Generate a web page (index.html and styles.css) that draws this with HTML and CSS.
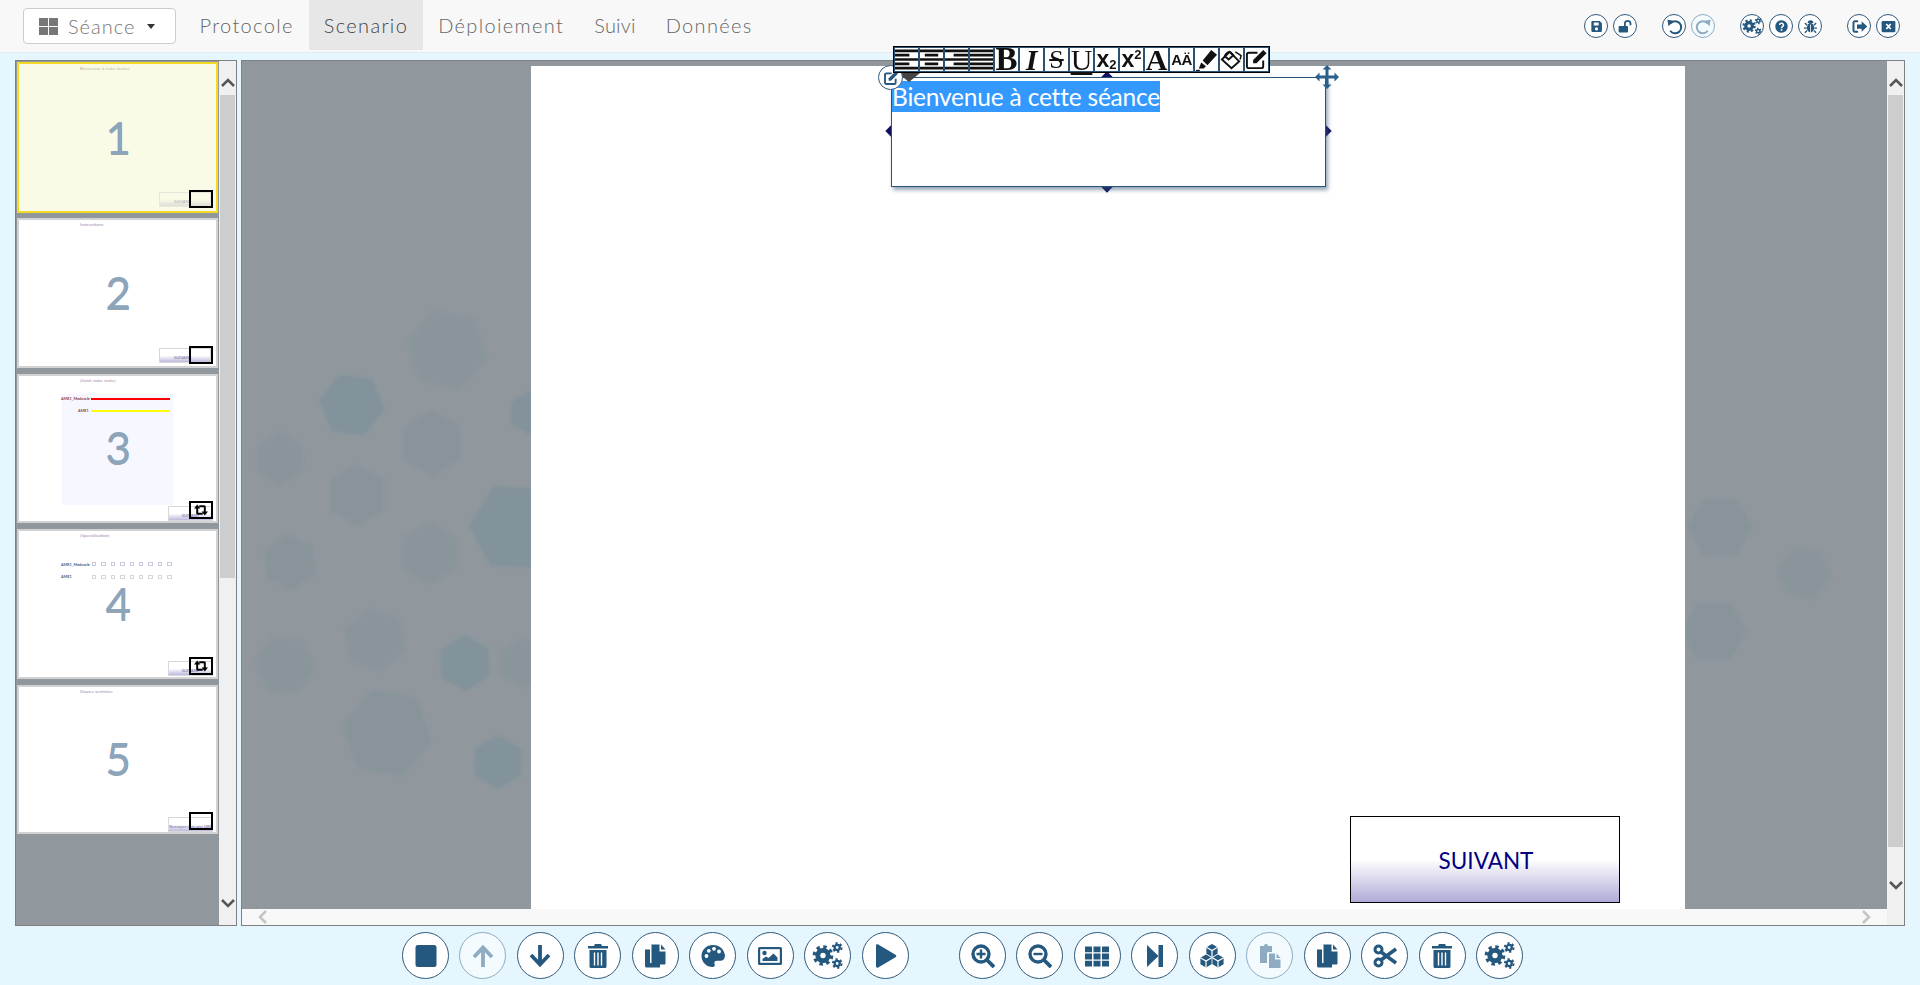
FILE: index.html
```html
<!DOCTYPE html>
<html lang="fr">
<head>
<meta charset="utf-8">
<title>Scenario</title>
<link rel="stylesheet" href="styles.css">
</head>
<body>
<svg class="sprite" xmlns="http://www.w3.org/2000/svg" aria-hidden="true">
  <symbol id="i-save" viewBox="0 0 24 24"><path fill-rule="evenodd" d="M4 2h14l4 4v14.500a1.500 1.500 0 0 1-1.500 1.500h-16.500a1.500 1.500 0 0 1-1.500-1.500V3.500A1.500 1.500 0 0 1 4 2zM7 4.500v5.500h9V4.500zM12 13.500a3 3 0 1 0 .01 0z"/></symbol>
  <symbol id="i-unlock" viewBox="0 0 24 24"><rect x="1" y="11" width="15" height="10.500" rx="1.500"/><path d="M11 11V7.500a4.500 4.500 0 0 1 9 0V10" fill="none" stroke="currentColor" stroke-width="2.800"/></symbol>
  <symbol id="i-undo" viewBox="0 0 24 24"><path d="M6.500 7.500A8.500 8.500 0 1 1 6 18" fill="none" stroke="currentColor" stroke-width="2.800"/><path d="M2 2.500l9 1.500-7.500 7.500z"/></symbol>
  <symbol id="i-redo" viewBox="0 0 24 24"><path d="M17.500 7.500A8.500 8.500 0 1 0 18 18" fill="none" stroke="currentColor" stroke-width="2.800"/><path d="M22 2.500l-9 1.500 7.500 7.500z"/></symbol>
  <symbol id="i-cogs" viewBox="0 0 24 24"><g fill="none" stroke="currentColor"><circle cx="8.500" cy="12" r="4" stroke-width="3.800"/><circle cx="8.500" cy="12" r="6.700" stroke-width="2.600" stroke-dasharray="2.630 2.630"/><circle cx="19.500" cy="5.800" r="2" stroke-width="1.800"/><circle cx="19.500" cy="5.800" r="3.400" stroke-width="1.500" stroke-dasharray="1.780 1.780"/><circle cx="19.500" cy="18.200" r="2" stroke-width="1.800"/><circle cx="19.500" cy="18.200" r="3.400" stroke-width="1.500" stroke-dasharray="1.780 1.780"/></g></symbol>
  <symbol id="i-question" viewBox="0 0 24 24"><circle cx="12" cy="12" r="11.500"/><path d="M8.500 9.300a3.600 3.400 0 1 1 5.300 3c-1.200.700-1.800 1.200-1.800 2.700" fill="none" stroke="#fff" stroke-width="2.800"/><rect x="10.500" y="16.800" width="3" height="3" fill="#fff"/></symbol>
  <symbol id="i-bug" viewBox="0 0 24 24"><ellipse cx="12" cy="14" rx="5.800" ry="7.500"/><path d="M7.500 6.500a4.500 4.500 0 0 1 9 0z"/><path d="M6.500 10L3 6.500M17.500 10L21 6.500M6 14.500H1.500M18 14.500h4.500M6.500 18.500L3 22M17.500 18.500L21 22" fill="none" stroke="currentColor" stroke-width="2.200"/><path d="M12 9v13" stroke="#fff" stroke-width="1.300"/></symbol>
  <symbol id="i-signout" viewBox="0 0 24 24"><path d="M10 4.500H5.500A2 2 0 0 0 3.500 6.500v11a2 2 0 0 0 2 2H10" fill="none" stroke="currentColor" stroke-width="2.800"/><path d="M8.500 9h6.500V4.500l8 7.500-8 7.500V15H8.500z"/></symbol>
  <symbol id="i-close" viewBox="0 0 24 24"><rect x="1" y="3" width="22" height="18" rx="2"/><path d="M8.500 8l7 8M15.500 8l-7 8" stroke="#fff" stroke-width="2.800"/></symbol>
  <symbol id="i-stop" viewBox="0 0 24 24"><rect x="1.500" y="1" width="21" height="22" rx="2.500"/></symbol>
  <symbol id="i-up" viewBox="0 0 24 24"><path d="M12 23V4M3 13l9-9.500 9 9.500" fill="none" stroke="currentColor" stroke-width="3.800"/></symbol>
  <symbol id="i-down" viewBox="0 0 24 24"><path d="M12 1v19M3 11l9 9.500 9-9.500" fill="none" stroke="currentColor" stroke-width="3.800"/></symbol>
  <symbol id="i-trash" viewBox="0 0 24 24"><path d="M9 0h6l1 2h6v2.500H2V2h6z"/><path d="M3.500 6h17v16.500a1.500 1.500 0 0 1-1.500 1.500H5a1.500 1.500 0 0 1-1.500-1.500z"/><path d="M8.500 8.500v13M12 8.500v13M15.500 8.500v13" stroke="#fff" stroke-width="1.400"/></symbol>
  <symbol id="i-copy" viewBox="0 0 24 24"><path d="M2 5.500h5v13.500h10v4.500H3.500A1.500 1.500 0 0 1 2 22z"/><path d="M8.500 0.500h8v7h6v12a1 1 0 0 1-1 1h-12a1 1 0 0 1-1-1z"/><path d="M18 0.500l4.500 5H18z"/></symbol>
  <symbol id="i-palette" viewBox="0 0 24 24"><path d="M12 1C5.500 1 0.500 5.800 0.500 12s5 11 11 11c2.200 0 2.700-1.700 2.100-3-.8-1.800.3-3.300 2.200-3.300h3.500c2.700 0 4.700-1.900 4.700-5C23.500 5.500 18.500 1 12 1z"/><g fill="#fff"><circle cx="5.500" cy="12" r="1.900"/><circle cx="7.800" cy="6.800" r="1.900"/><circle cx="13" cy="4.800" r="1.900"/><circle cx="18" cy="7.500" r="1.900"/></g></symbol>
  <symbol id="i-image" viewBox="0 0 24 24"><rect x="0" y="3" width="24" height="18" rx="1.500"/><rect x="2.200" y="5.200" width="19.600" height="13.600" fill="#fff"/><circle cx="6.500" cy="9" r="2.200"/><path d="M4.500 17v-2l3.500-2.500 2.500 1.500 5-4.500 4 4v3.500z"/></symbol>
  <symbol id="i-play" viewBox="0 0 24 24"><path d="M3 1.500c0-1.200 1.200-1.500 2.200-.9L22.500 10.800c1.100.7 1.100 1.700 0 2.400L5.200 23.400c-1 .6-2.200.3-2.200-.9z"/></symbol>
  <symbol id="i-zoomin" viewBox="0 0 24 24"><circle cx="10" cy="10" r="8" fill="none" stroke="currentColor" stroke-width="3.400"/><path d="M15.500 15.500L23 23" stroke="currentColor" stroke-width="3.800"/><path d="M10 5.500v9M5.500 10h9" stroke="currentColor" stroke-width="2.400"/></symbol>
  <symbol id="i-zoomout" viewBox="0 0 24 24"><circle cx="10" cy="10" r="8" fill="none" stroke="currentColor" stroke-width="3.400"/><path d="M15.500 15.500L23 23" stroke="currentColor" stroke-width="3.800"/><path d="M5.500 10h9" stroke="currentColor" stroke-width="2.400"/></symbol>
  <symbol id="i-th" viewBox="0 0 24 24"><path d="M0 2.500h7v5.800H0zM8.500 2.500h7v5.800h-7zM17 2.500h7v5.800h-7zM0 9.600h7v5.800H0zM8.500 9.600h7v5.800h-7zM17 9.600h7v5.800h-7zM0 16.700h7v5.800H0zM8.500 16.700h7v5.800h-7zM17 16.700h7v5.800h-7z"/></symbol>
  <symbol id="i-next" viewBox="0 0 24 24"><path d="M4 1l11.500 11L4 23z"/><rect x="15.500" y="1" width="4.500" height="22"/></symbol>
  <symbol id="i-cubes" viewBox="0 0 24 24"><g transform="translate(12 6.500)"><path d="M0-6.500l5.600 3.200v6.600L0 6.500l-5.600-3.200v-6.600z"/><path d="M-5.600-3.300L0 0l5.600-3.300M0 0v6.500" fill="none" stroke="#fff" stroke-width="1.200"/></g><g transform="translate(6 17)"><path d="M0-6.500l5.600 3.200v6.600L0 6.500l-5.600-3.200v-6.600z"/><path d="M-5.600-3.300L0 0l5.600-3.300M0 0v6.500" fill="none" stroke="#fff" stroke-width="1.200"/></g><g transform="translate(18 17)"><path d="M0-6.500l5.600 3.200v6.600L0 6.500l-5.600-3.200v-6.600z"/><path d="M-5.600-3.300L0 0l5.600-3.300M0 0v6.500" fill="none" stroke="#fff" stroke-width="1.200"/></g></symbol>
  <symbol id="i-paste" viewBox="0 0 24 24"><path d="M2 2h4a2 2 0 0 1 4 0h4v6h-3.500a1.500 1.500 0 0 0-1.500 1.500V19H2z"/><path d="M11 9.500h6v6h5.500V24H11z"/><path d="M18.500 9.500l4 4.500h-4z"/></symbol>
  <symbol id="i-cut" viewBox="0 0 24 24"><g fill="none" stroke="currentColor"><circle cx="5.500" cy="5.500" r="3.500" stroke-width="3"/><circle cx="5.500" cy="18.500" r="3.500" stroke-width="3"/><path d="M8 8l15 11M8 16L23 5" stroke-width="3.600"/></g></symbol>
  <symbol id="i-edit" viewBox="0 0 24 24"><path d="M19 13v6a2 2 0 0 1-2 2H5a2 2 0 0 1-2-2V7a2 2 0 0 1 2-2h8" fill="none" stroke="currentColor" stroke-width="2.800"/><path d="M8.500 12.500L19 2l3.500 3.500L12 16H8.500z"/></symbol>
  <symbol id="i-move" viewBox="0 0 24 24"><path d="M12 0l4.500 4.500h-3v6h6v-3L24 12l-4.500 4.500v-3h-6v6h3L12 24l-4.500-4.500h3v-6h-6v3L0 12l4.500-4.500v3h6v-6h-3z"/></symbol>
  <symbol id="i-retweet" viewBox="0 0 24 24"><path d="M5.500 8v9.500a1 1 0 0 0 1 1H15M18.500 16V6.500a1 1 0 0 0-1-1H9" fill="none" stroke="#000" stroke-width="3.400"/><path d="M0 9.500L5.500 2.500l5.500 7zM13 14.500l5.500 7 5.500-7z" fill="#000"/></symbol>
  <symbol id="a-left" viewBox="0 0 24 24"><path d="M0 3h24M0 7.500h15M0 12h24M0 16.500h15M0 21h24" stroke="#111" stroke-width="2.800"/></symbol>
  <symbol id="a-center" viewBox="0 0 24 24"><path d="M0 3h24M5 7.500h14M0 12h24M5 16.500h14M0 21h24" stroke="#111" stroke-width="2.800"/></symbol>
  <symbol id="a-right" viewBox="0 0 24 24"><path d="M0 3h24M9 7.500h15M0 12h24M9 16.500h15M0 21h24" stroke="#111" stroke-width="2.800"/></symbol>
  <symbol id="a-just" viewBox="0 0 24 24"><path d="M0 3h24M0 7.500h24M0 12h24M0 16.500h24M0 21h24" stroke="#111" stroke-width="2.800"/></symbol>
  <symbol id="a-marker" viewBox="0 0 24 24"><path d="M8 13L17 2l6 5-10 11z" fill="#111"/><path d="M6.500 15l5 4-2.500 2.500H4z" fill="#111"/><path d="M1 23.500h4" stroke="#111" stroke-width="1.500"/></symbol>
  <symbol id="a-erase" viewBox="0 0 24 24"><path d="M2 12L10 4l10 10-8 7z" fill="none" stroke="#111" stroke-width="2"/><path d="M5 8.500c1-3 4-5 6-4l3 3-5 4.500z" fill="none" stroke="#111" stroke-width="2"/><path d="M16 4l6 4-1 4" fill="none" stroke="#111" stroke-width="1.600"/></symbol>
  <symbol id="a-edit" viewBox="0 0 24 24"><path d="M19 13v6a2 2 0 0 1-2 2H4a2 2 0 0 1-2-2V7a2 2 0 0 1 2-2h9" fill="none" stroke="#111" stroke-width="2"/><path d="M8.500 12.500L19 2l3.500 3.500L12 16H8.500z" fill="#111"/></symbol>
  <symbol id="hexagon" viewBox="-1 -1 2 2" overflow="visible"><path d="M1 0L.5 .87L-.5 .87L-1 0L-.5 -.87L.5 -.87z"/></symbol>
</svg>

<div class="app">
  <header class="topbar">
    <button class="session-btn">
      <span class="grid-glyph"><i></i><i></i><i></i><i></i></span>
      <span>Séance</span>
      <span class="caret"></span>
    </button>
    <nav class="nav">
      <a class="nav-item">Protocole</a>
      <a class="nav-item nav-active">Scenario</a>
      <a class="nav-item">Déploiement</a>
      <a class="nav-item nav-tight">Suivi</a>
      <a class="nav-item">Données</a>
    </nav>
    <div class="top-actions">
      <div class="top-group">
        <span class="rbtn rbtn-s"><svg class="ico-sm"><use href="#i-save"/></svg></span>
        <span class="rbtn rbtn-s"><svg class="ico-md"><use href="#i-unlock"/></svg></span>
      </div>
      <div class="top-group">
        <span class="rbtn rbtn-s"><svg class="ico-lg"><use href="#i-undo"/></svg></span>
        <span class="rbtn rbtn-s rbtn-off"><svg class="ico-lg"><use href="#i-redo"/></svg></span>
      </div>
      <div class="top-group">
        <span class="rbtn rbtn-s"><svg class="ico-xl"><use href="#i-cogs"/></svg></span>
        <span class="rbtn rbtn-s"><svg class="ico-sm"><use href="#i-question"/></svg></span>
        <span class="rbtn rbtn-s"><svg class="ico-md"><use href="#i-bug"/></svg></span>
      </div>
      <div class="top-group">
        <span class="rbtn rbtn-s"><svg class="ico-lg"><use href="#i-signout"/></svg></span>
        <span class="rbtn rbtn-s"><svg class="ico-md"><use href="#i-close"/></svg></span>
      </div>
    </div>
  </header>

  <main class="workspace">
    <aside class="thumbs-panel">
      <div class="thumbs">
        <article class="thumb thumb-current">
          <p class="thumb-title">Bienvenue à cette séance</p>
          <span class="thumb-num">1</span>
          <span class="mini-btn mini-wide mini-faded">SUIVANT</span>
          <span class="mini-frame"></span>
        </article>
        <article class="thumb">
          <p class="thumb-title">Instructions</p>
          <span class="thumb-num">2</span>
          <span class="mini-btn mini-wide">SUIVANT</span>
          <span class="mini-frame"></span>
        </article>
        <article class="thumb">
          <p class="thumb-title">[Saisir votre texte]</p>
          <div class="mini-area"></div>
          <span class="mini-label mini-l1">AME1_Moduscle</span>
          <span class="mini-bar mini-bar-red"></span>
          <span class="mini-label mini-l2">AME1</span>
          <span class="mini-bar mini-bar-yellow"></span>
          <span class="thumb-num">3</span>
          <span class="mini-btn mini-low">SUIVANT</span>
          <span class="mini-frame"><svg><use href="#i-retweet"/></svg></span>
        </article>
        <article class="thumb">
          <p class="thumb-title">[Specialisation]</p>
          <span class="mini-label mini-l3">AME1_Moduscle</span>
          <div class="mini-checks mini-checks-a"><i></i><i></i><i></i><i></i><i></i><i></i><i></i><i></i><i></i></div>
          <span class="mini-label mini-l4">AME1</span>
          <div class="mini-checks mini-checks-b"><i></i><i></i><i></i><i></i><i></i><i></i><i></i><i></i><i></i></div>
          <span class="thumb-num">4</span>
          <span class="mini-btn mini-low">SUIVANT</span>
          <span class="mini-frame"><svg><use href="#i-retweet"/></svg></span>
        </article>
        <article class="thumb">
          <p class="thumb-title">Séance terminée</p>
          <span class="thumb-num">5</span>
          <span class="mini-btn mini-low">Renvoyer vers une URL</span>
          <span class="mini-frame"></span>
        </article>
      </div>
      <div class="vscroll">
        <span class="scroll-end"><svg class="chev"><path d="M1 8l6-6 6 6"/></svg></span>
        <span class="vthumb vthumb-left"></span>
        <span class="scroll-fill"></span>
        <span class="scroll-end scroll-end-low"><svg class="chev"><path d="M1 2l6 6 6-6"/></svg></span>
      </div>
    </aside>

    <section class="stage">
      <div class="canvas">
        <svg class="hexes" viewBox="242 61 1645 848" aria-hidden="true">
          <g class="hex-l">
            <use href="#hexagon" x="-1" y="-1" width="2" height="2" transform="translate(447 350) rotate(12) scale(42)"/>
            <use href="#hexagon" x="-1" y="-1" width="2" height="2" transform="translate(280 458) rotate(30) scale(27)"/>
            <use href="#hexagon" x="-1" y="-1" width="2" height="2" transform="translate(430 553) rotate(30) scale(32)"/>
            <use href="#hexagon" x="-1" y="-1" width="2" height="2" transform="translate(285 665) rotate(5) scale(31)"/>
            <use href="#hexagon" x="-1" y="-1" width="2" height="2" transform="translate(375 640) rotate(20) scale(33)"/>
            <use href="#hexagon" x="-1" y="-1" width="2" height="2" transform="translate(523 663) rotate(30) scale(26)"/>
            <use href="#hexagon" x="-1" y="-1" width="2" height="2" transform="translate(1804 573) rotate(10) scale(28)"/>
          </g>
          <g class="hex-m">
            <use href="#hexagon" x="-1" y="-1" width="2" height="2" transform="translate(432 443) rotate(28) scale(33)"/>
            <use href="#hexagon" x="-1" y="-1" width="2" height="2" transform="translate(357 495) rotate(30) scale(31)"/>
            <use href="#hexagon" x="-1" y="-1" width="2" height="2" transform="translate(290 562) rotate(25) scale(28)"/>
            <use href="#hexagon" x="-1" y="-1" width="2" height="2" transform="translate(387 733) rotate(10) scale(46)"/>
            <use href="#hexagon" x="-1" y="-1" width="2" height="2" transform="translate(1720 527) rotate(0) scale(33)"/>
            <use href="#hexagon" x="-1" y="-1" width="2" height="2" transform="translate(1714 631) rotate(0) scale(33)"/>
          </g>
          <g class="hex-d">
            <use href="#hexagon" x="-1" y="-1" width="2" height="2" transform="translate(352 405) rotate(8) scale(33)"/>
            <use href="#hexagon" x="-1" y="-1" width="2" height="2" transform="translate(465 663) rotate(28) scale(28)"/>
            <use href="#hexagon" x="-1" y="-1" width="2" height="2" transform="translate(498 762) rotate(30) scale(27)"/>
            <use href="#hexagon" x="-1" y="-1" width="2" height="2" transform="translate(515 527) rotate(62) scale(46)"/>
            <use href="#hexagon" x="-1" y="-1" width="2" height="2" transform="translate(530 413) rotate(30) scale(22)"/>
          </g>
        </svg>
        <div class="slide">
          <div class="selection">
            <i class="handle handle-t"></i>
            <i class="handle handle-r"></i>
            <i class="handle handle-b"></i>
            <i class="handle handle-l"></i>
            <div class="textbox"><span class="selected-text">Bienvenue à cette séance</span></div>
            <span class="caret-tip"></span>
            <span class="edit-badge"><svg><use href="#i-edit"/></svg></span>
            <svg class="move-grip"><use href="#i-move"/></svg>
            <div class="format-bar">
              <span class="fmt"><svg><use href="#a-left"/></svg></span>
              <span class="fmt"><svg><use href="#a-center"/></svg></span>
              <span class="fmt"><svg><use href="#a-right"/></svg></span>
              <span class="fmt"><svg><use href="#a-just"/></svg></span>
              <span class="fmt fmt-serif fmt-b">B</span>
              <span class="fmt fmt-serif fmt-i">I</span>
              <span class="fmt fmt-serif fmt-s">S</span>
              <span class="fmt fmt-serif fmt-u">U</span>
              <span class="fmt fmt-x">x<small class="sub">2</small></span>
              <span class="fmt fmt-x">x<small class="sup">2</small></span>
              <span class="fmt fmt-serif fmt-a">A</span>
              <span class="fmt fmt-aa">AÄ</span>
              <span class="fmt"><svg><use href="#a-marker"/></svg></span>
              <span class="fmt"><svg><use href="#a-erase"/></svg></span>
              <span class="fmt"><svg><use href="#a-edit"/></svg></span>
            </div>
          </div>
          <div class="next-btn">SUIVANT</div>
        </div>
      </div>
      <div class="vscroll vscroll-main">
        <span class="scroll-end"><svg class="chev"><path d="M1 8l6-6 6 6"/></svg></span>
        <span class="vthumb vthumb-main"></span>
        <span class="scroll-fill"></span>
        <span class="scroll-end scroll-end-main"><svg class="chev"><path d="M1 2l6 6 6-6"/></svg></span>
      </div>
      <div class="hscroll">
        <svg class="chev-h"><path d="M8 1L2 7l6 6"/></svg>
        <svg class="chev-h"><path d="M2 1l6 6-6 6"/></svg>
      </div>
      <div class="scroll-corner"></div>
    </section>
  </main>

  <footer class="dock">
    <div class="dock-group">
      <span class="rbtn"><svg><use href="#i-stop"/></svg></span>
      <span class="rbtn rbtn-off"><svg><use href="#i-up"/></svg></span>
      <span class="rbtn"><svg><use href="#i-down"/></svg></span>
      <span class="rbtn"><svg><use href="#i-trash"/></svg></span>
      <span class="rbtn"><svg><use href="#i-copy"/></svg></span>
      <span class="rbtn"><svg><use href="#i-palette"/></svg></span>
      <span class="rbtn"><svg><use href="#i-image"/></svg></span>
      <span class="rbtn"><svg class="ico-xl"><use href="#i-cogs"/></svg></span>
      <span class="rbtn"><svg><use href="#i-play"/></svg></span>
    </div>
    <div class="dock-group">
      <span class="rbtn"><svg><use href="#i-zoomin"/></svg></span>
      <span class="rbtn"><svg><use href="#i-zoomout"/></svg></span>
      <span class="rbtn"><svg><use href="#i-th"/></svg></span>
      <span class="rbtn"><svg><use href="#i-next"/></svg></span>
      <span class="rbtn"><svg><use href="#i-cubes"/></svg></span>
      <span class="rbtn rbtn-off"><svg><use href="#i-paste"/></svg></span>
      <span class="rbtn"><svg><use href="#i-copy"/></svg></span>
      <span class="rbtn"><svg><use href="#i-cut"/></svg></span>
      <span class="rbtn"><svg><use href="#i-trash"/></svg></span>
      <span class="rbtn"><svg class="ico-xl"><use href="#i-cogs"/></svg></span>
    </div>
  </footer>
</div>
</body>
</html>
```
FILE: styles.css
```css
* { box-sizing: border-box; }
html, body { margin: 0; height: 100%; }
body { background: #e6f6fe; font-family: Lato, "Liberation Sans", sans-serif; color: #777; overflow: hidden; }
.sprite { display: none; }

.app { height: 985px; display: flex; flex-direction: column; }

/* Top bar */
.topbar { height: 53px; flex: none; display: flex; align-items: flex-start; background: #f8f8f8; border-bottom: 1px solid #e4ecef; padding: 0 20px 0 23px; }
.session-btn { margin-top: 8px; width: 153px; height: 36px; display: flex; align-items: center; padding: 0 0 0 15px; background: #fff; border: 1px solid #ccc; border-radius: 4px; color: #777; font: 300 20px Lato, sans-serif; letter-spacing: 1px; }
.grid-glyph { width: 19px; height: 17px; display: grid; grid-template-columns: 1fr 1fr; gap: 1px; margin-right: 10px; }
.grid-glyph i { background: #777; }
.caret { margin-left: 12px; width: 0; height: 0; border-left: 4.500px solid transparent; border-right: 4.500px solid transparent; border-top: 5px solid #333; }
.nav { display: flex; margin-left: 8.500px; }
.nav-item { height: 50px; display: flex; align-items: center; padding: 0 15px; font-size: 20px; font-weight: 300; letter-spacing: 1.350px; color: #666; }
.nav-tight { letter-spacing: .2px; }
.nav-active { background: #e7e7e7; color: #444; }
.top-actions { margin-left: auto; margin-top: 14px; display: flex; gap: 25px; }
.top-group { display: flex; gap: 5px; }

/* Round buttons */
.rbtn { width: 47px; height: 47px; flex: none; display: flex; align-items: center; justify-content: center; border-radius: 50%; background: #fff; border: 1px solid #31597c; color: #25587f; }
.rbtn svg { width: 24px; height: 24px; fill: currentColor; }
.rbtn .ico-xl { width: 31px; height: 31px; }
.rbtn-s { width: 24px; height: 24px; }
.rbtn-s .ico-sm { width: 13px; height: 13px; }
.rbtn-s .ico-md { width: 15px; height: 15px; }
.rbtn-s .ico-lg { width: 17px; height: 17px; }
.rbtn-s .ico-xl { width: 20px; height: 20px; }
.rbtn-off { background: #f3fbff; border-color: #8eabc1; color: #8eabc1; }

/* Workspace */
.workspace { flex: none; height: 873px; display: flex; gap: 4px; padding: 7px 0 0 15px; }
.thumbs-panel { width: 222px; height: 866px; display: flex; background: #90989e; border: 1px solid #808080; }
.thumbs { width: 203px; padding: 1px 0 0 1px; display: flex; flex-direction: column; gap: 6px; }
.thumb { position: relative; flex: none; width: 200.500px; height: 149.500px; background: #fff; box-shadow: inset 0 0 0 2px #d2d2d2; }
.thumb-current { height: 151px; margin-bottom: -1px; background: #fafbe6; box-shadow: inset 0 0 0 2px #f5d927; }
.thumb-title { position: absolute; left: 63px; top: 4px; margin: 0; font-size: 4.500px; line-height: 6px; color: #9b88ab; white-space: nowrap; }
.thumb-current .thumb-title { color: #b5b5a8; }
.thumb-num { position: absolute; left: 0; right: 0; top: 50%; margin-top: -28px; padding-left: 2px; text-align: center; font-size: 44px; line-height: 54px; color: #8ba5bc; text-shadow: 0 1px 0 #9aa2ac; }
.mini-btn { position: absolute; top: 132px; height: 15px; padding-top: 6px; text-align: center; font-size: 4.200px; line-height: 6px; color: #6c6a96; white-space: nowrap; overflow: hidden; background: linear-gradient(#fff 50%, #bdb9dd); border: 1px solid #d8d8d8; }
.mini-wide { left: 142px; width: 52px; top: 130px; padding-right: 5px; }
.mini-low { left: 151px; width: 45px; }
.mini-faded { opacity: .55; background: linear-gradient(#fafbe6 50%, #c8c8c8); }
.mini-frame { position: absolute; left: 172px; top: 127.500px; width: 24px; height: 18px; border: 2px solid #000; display: flex; align-items: center; justify-content: center; color: #000; }
.mini-frame svg { width: 16px; height: 14px; }
.mini-area { position: absolute; left: 45px; top: 20px; width: 111px; height: 111px; background: #f7f8ff; }
.mini-bar { position: absolute; left: 74px; width: 79px; height: 2px; }
.mini-bar-red { top: 24px; background: #f00; }
.mini-bar-yellow { top: 36px; background: #ff0; }
.mini-label { position: absolute; font-size: 3.800px; line-height: 5px; font-weight: 700; white-space: nowrap; color: #8c3a3a; }
.mini-l1 { left: 44px; top: 22.500px; }
.mini-l2 { left: 61px; top: 34.500px; }
.mini-l3 { left: 44px; top: 33px; color: #3a5d82; }
.mini-l4 { left: 44px; top: 45px; color: #3a5d82; }
.mini-checks { position: absolute; left: 75px; display: flex; gap: 5px; }
.mini-checks i { width: 4.400px; height: 4.400px; border: 1px solid #c9c9e0; }
.mini-checks-a { top: 33px; }
.mini-checks-b { top: 45.500px; }
.mini-checks-b i { border-color: #d6d6d6; }

/* Scrollbars */
.vscroll { width: 17px; flex: none; background: #f0f0f0; display: flex; flex-direction: column; align-items: center; }
.scroll-end { height: 34px; display: flex; align-items: center; justify-content: center; flex: none; padding-top: 10px; }
.scroll-end-low { height: 44px; padding: 0; }
.scroll-end-main { height: 43px; padding: 0 0 6px; }
.scroll-fill { flex: 1; }
.vthumb { width: 15px; flex: none; background: #cdcdcd; }
.vthumb-left { height: 483px; }
.vthumb-main { height: 752px; }
.vscroll-main { width: auto; }
.chev { width: 14px; height: 10px; fill: none; stroke: #555; stroke-width: 2.500px; }
.chev-h { width: 10px; height: 14px; fill: none; stroke: #c4c4c4; stroke-width: 2.500px; }

.stage { width: 1664px; height: 866px; border: 1px solid #808080; display: grid; grid-template-columns: 1645px 17px; grid-template-rows: 848px 16px; }
.canvas { position: relative; background: #90989e; padding: 5px 0 0 289px; }
.hexes { position: absolute; left: 0; top: 0; width: 1645px; height: 848px; }
.hexes g { filter: blur(1.500px); }
.hex-l { fill: #7f8f96; fill-opacity: .3; }
.hex-m { fill: #7e8f97; fill-opacity: .42; }
.hex-d { fill: #7a8f99; fill-opacity: .6; }
.hscroll { background: #f8f8f8; display: flex; align-items: center; justify-content: space-between; padding: 0 16px; }
.scroll-corner { background: #f0f0f0; }

/* Slide */
.slide { position: relative; width: 1154px; height: 843px; background: #fff; }
.selection { position: absolute; left: 360px; top: 11px; width: 435px; height: 110px; }
.handle { position: absolute; width: 8px; height: 8px; background: #10105e; transform: rotate(45deg); }
.handle-t { left: 212px; top: -4px; }
.handle-b { left: 212px; bottom: -4px; }
.handle-l { left: -4px; top: 50px; }
.handle-r { right: -4px; top: 50px; }
.textbox { position: relative; width: 100%; height: 100%; padding: 3px 0 0; background: #fff; border: 1px solid #24547c; box-shadow: 2px 3px 4px rgba(60, 90, 120, .55); font-size: 24.500px; line-height: 31px; letter-spacing: -.2px; color: #fff; }
.selected-text { background: #3399ff; display: inline-block; }
.caret-tip { position: absolute; left: 7px; top: -4px; width: 0; height: 0; border-left: 11px solid transparent; border-right: 11px solid transparent; border-top: 9px solid #444; }
.edit-badge { position: absolute; left: -13px; top: -12px; width: 25px; height: 25px; border-radius: 50%; border: 1px solid #31597c; background: #fff; color: #25587f; display: flex; align-items: center; justify-content: center; }
.edit-badge svg { width: 16px; height: 16px; fill: currentColor; }
.move-grip { position: absolute; left: 424px; top: -12px; width: 24px; height: 24px; color: #2b5f8c; fill: currentColor; }
.format-bar { position: absolute; left: 2px; top: -31px; display: flex; border: 1px solid #000; background: #2b4f6e; }
.fmt { width: 25px; height: 25px; background: #fff; border: 1px solid #2b5272; display: flex; align-items: center; justify-content: center; color: #111; line-height: 25px; }
.fmt svg { width: 23px; height: 23px; }
.fmt-serif { font-family: "Liberation Serif", serif; font-size: 30px; }
.fmt-b { font-weight: 700; font-size: 33px; }
.fmt-i { font-style: italic; font-weight: 700; }
.fmt-s { text-decoration: line-through; font-size: 26px; }
.fmt-u { text-decoration: underline; font-size: 30px; }
.fmt-a { font-weight: 700; font-size: 30px; }
.fmt-x { font-family: "Liberation Sans", sans-serif; font-weight: 700; font-size: 23px; align-items: center; }
.fmt-x small { font-size: 13px; line-height: 13px; }
.sub { align-self: flex-end; }
.sup { align-self: flex-start; }
.fmt-aa { font-family: "Liberation Sans", sans-serif; font-weight: 700; font-size: 15px; letter-spacing: -.5px; }
.next-btn { position: absolute; left: 819px; top: 750px; width: 270px; height: 87px; display: flex; align-items: center; justify-content: center; padding: 2px 0 0 2px; border: 1px solid #000; background: linear-gradient(#fff 50%, #afabd7); color: #000080; font-size: 22.500px; }

/* Bottom dock */
.dock { flex: 1; display: flex; justify-content: center; gap: 50.500px; padding: 6px 0 0 5px; }
.dock-group { display: flex; gap: 10.440px; }
```
